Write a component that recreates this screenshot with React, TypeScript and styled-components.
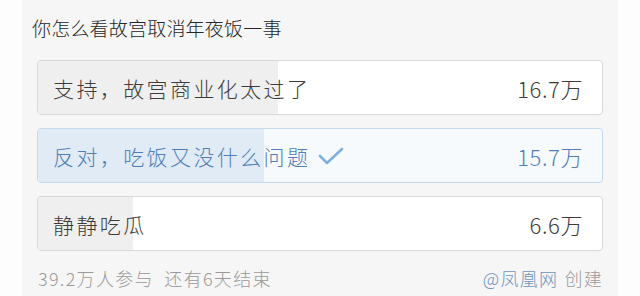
import React from "react";
import styled, { createGlobalStyle } from "styled-components";

const GlobalStyle = createGlobalStyle`
  html, body {
    margin: 0;
    padding: 0;
    background: #fdfdfd;
  }
  body {
    font-family: "Noto Sans CJK SC", "Liberation Sans", sans-serif;
  }
`;

const Page = styled.div`
  width: 640px;
  height: 296px;
  overflow: hidden;
  padding-left: 22px;
  box-sizing: border-box;
`;

const Card = styled.div`
  width: 596px;
  height: 296px;
  background: #f6f6f6;
  padding: 0 15px;
  box-sizing: border-box;
  display: flex;
  flex-direction: column;
`;

const Title = styled.div`
  height: 60px;
  padding-bottom: 6px;
  box-sizing: border-box;
  display: flex;
  align-items: center;
  margin-left: -5px;
  font-size: 19px;
  font-weight: 300;
  letter-spacing: 0.2px;
  color: #262626;
`;

const OptionList = styled.div`
  display: flex;
  flex-direction: column;
  gap: 13px;
`;

const OptionBox = styled.div<{ $selected?: boolean }>`
  position: relative;
  height: 55px;
  box-sizing: border-box;
  border: 1px solid ${({ $selected }) => ($selected ? "#c4daee" : "#d8d8d8")};
  border-radius: 4px;
  background: ${({ $selected }) => ($selected ? "#f6fafd" : "#ffffff")};
  overflow: hidden;
  display: flex;
  align-items: center;
  justify-content: space-between;
  padding: 0 19px 0 15px;
  color: ${({ $selected }) => ($selected ? "#4f7fb6" : "#3c3c3c")};
  font-weight: 300;
`;

const Fill = styled.div<{ $selected?: boolean }>`
  position: absolute;
  left: 0;
  top: 0;
  bottom: 0;
  background: ${({ $selected }) => ($selected ? "#e0ebf6" : "#efefef")};
`;

const Label = styled.span`
  position: relative;
  display: flex;
  align-items: center;
  gap: 8px;
  font-size: 21px;
  letter-spacing: 2.4px;
`;

const Count = styled.span`
  position: relative;
  font-size: 22px;
  letter-spacing: 0.6px;
`;

const Footer = styled.div`
  display: flex;
  justify-content: space-between;
  align-items: center;
  padding: 14px 0 0 1px;
  font-size: 18px;
  font-weight: 300;
  letter-spacing: 1.3px;
  color: #9a9a9a;
`;

const Creator = styled.span`
  color: #9a9a9a;
  b {
    font-weight: 300;
    color: #6d93bd;
    margin-right: 6px;
  }
`;

const Check = () => (
  <svg width="26" height="18" viewBox="0 0 26 18">
    <path
      d="M2 9 L9 16 L24 2"
      fill="none"
      stroke="#7fb0de"
      strokeWidth="2.6"
      strokeLinecap="round"
      strokeLinejoin="round"
    />
  </svg>
);

type Option = { text: string; count: number; selected?: boolean };

const options: Option[] = [
  { text: "支持，故宫商业化太过了", count: 16.7 },
  { text: "反对，吃饭又没什么问题", count: 15.7, selected: true },
  { text: "静静吃瓜", count: 6.6 },
];

const total = 39.2;

const App: React.FC = () => (
  <Page>
    <GlobalStyle />
    <Card>
      <Title>你怎么看故宫取消年夜饭一事</Title>
      <OptionList>
        {options.map((o) => (
          <OptionBox key={o.text} $selected={o.selected}>
            <Fill
              $selected={o.selected}
              style={{ width: `${(o.count / total) * 100}%` }}
            />
            <Label>
              {o.text}
              {o.selected && <Check />}
            </Label>
            <Count>{o.count}万</Count>
          </OptionBox>
        ))}
      </OptionList>
      <Footer>
        <span>39.2万人参与&nbsp;&nbsp;还有6天结束</span>
        <Creator>
          <b>@凤凰网</b>创建
        </Creator>
      </Footer>
    </Card>
  </Page>
);

export default App;
